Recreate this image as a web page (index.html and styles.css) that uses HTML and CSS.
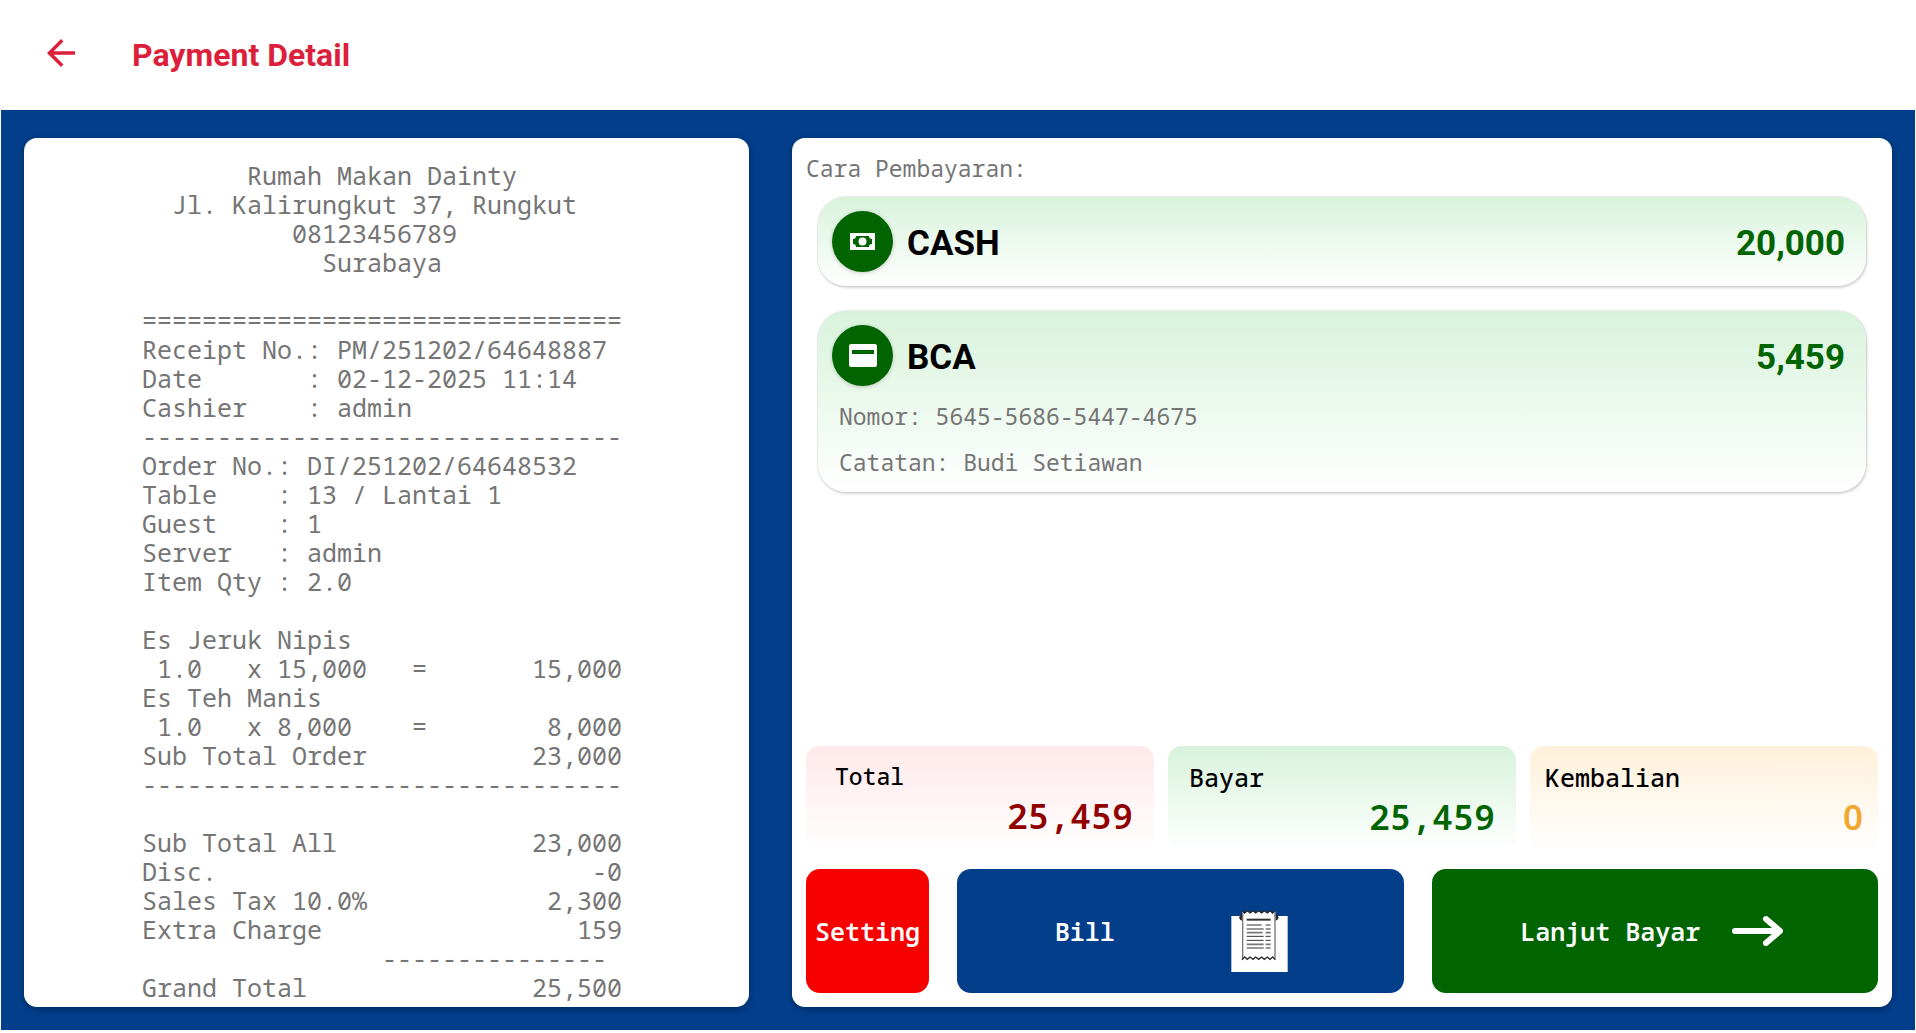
FILE: index.html
```html
<!DOCTYPE html>
<html lang="id">
<head>
    <meta charset="UTF-8">
    <meta name="viewport" content="width=device-width, initial-scale=1.0">
    <title>Payment Detail</title>
    <link rel="stylesheet" href="styles.css">
</head>
<body>
    <header class="topbar">
        <button type="button" class="back" aria-label="Back">
            <svg viewBox="0 0 24 24"><path d="M20 11H7.83l5.59-5.59L12 4l-8 8 8 8 1.41-1.41L7.83 13H20v-2z"/></svg>
        </button>
        <h1>Payment Detail</h1>
    </header>

    <main class="content">
        <section class="panel receipt">
<pre class="receipt-text">
       Rumah Makan Dainty
  Jl. Kalirungkut 37, Rungkut
          08123456789
            Surabaya

================================
Receipt No.: PM/251202/64648887
Date       : 02-12-2025 11:14
Cashier    : admin
--------------------------------
Order No.: DI/251202/64648532
Table    : 13 / Lantai 1
Guest    : 1
Server   : admin
Item Qty : 2.0

Es Jeruk Nipis
 1.0   x 15,000   =       15,000
Es Teh Manis
 1.0   x 8,000    =        8,000
Sub Total Order           23,000
--------------------------------

Sub Total All             23,000
Disc.                         -0
Sales Tax 10.0%            2,300
Extra Charge                 159
                --------------- 
Grand Total               25,500
</pre>
        </section>

        <section class="panel payment">
            <h2 class="payment-title">Cara Pembayaran:</h2>

            <div class="methods">
                <article class="method">
                    <div class="method-row">
                        <span class="method-icon">
                            <svg viewBox="0 0 25 17">
                                <path fill-rule="evenodd" d="M0 0h25v17H0zM6 3a3 3 0 0 1-3 3v5a3 3 0 0 1 3 3h13a3 3 0 0 1 3-3V6a3 3 0 0 1-3-3z"/>
                                <circle cx="12.5" cy="8.5" r="4"/>
                            </svg>
                        </span>
                        <h3>CASH</h3>
                        <span class="method-amount">20,000</span>
                    </div>
                </article>

                <article class="method">
                    <div class="method-row">
                        <span class="method-icon">
                            <svg class="card-icon" viewBox="0 0 28 23">
                                <path fill-rule="evenodd" d="M2 0h24a2 2 0 0 1 2 2v19a2 2 0 0 1-2 2H2a2 2 0 0 1-2-2V2a2 2 0 0 1 2-2zM3 6v4h22V6z"/>
                            </svg>
                        </span>
                        <h3>BCA</h3>
                        <span class="method-amount">5,459</span>
                    </div>
                    <p class="method-note">Nomor: 5645-5686-5447-4675</p>
                    <p class="method-note">Catatan: Budi Setiawan</p>
                </article>
            </div>

            <div class="summary">
                <div class="box total">
                    <span class="box-label">Total</span>
                    <span class="box-value">25,459</span>
                </div>
                <div class="box paid">
                    <span class="box-label">Bayar</span>
                    <span class="box-value">25,459</span>
                </div>
                <div class="box change">
                    <span class="box-label">Kembalian</span>
                    <span class="box-value">0</span>
                </div>
            </div>

            <div class="actions">
                <button type="button" class="btn setting">Setting</button>
                <button type="button" class="btn bill">
                    Bill
                    <svg class="bill-icon" viewBox="0 0 171 186">
                        <path fill="#fff" d="M1 18h169v168H1z"/>
                        <path fill="#2b2b2d" d="M34 10l-6 5-4 8 4 7 6 2zM133 10l6 5 4 8-4 7-6 2z"/>
                        <path fill="#fff" d="M34 3l7 7 8-7 8 7 9-7 8 7 9-7 9 7 8-7 9 7 8-7 8 7 8-7v144l-6-7-8 7-8-7-9 7-8-7-9 7-9-7-8 7-9-7-8 7-9-7-6 7z"/>
                        <path fill="none" stroke="#77777a" stroke-width="4" d="M35 8v138M132 8v138"/>
                        <path fill="none" stroke="#2b2b2d" stroke-width="4" d="M33 2l8 7 8-7 8 7 9-7 8 7 9-7 9 7 8-7 9 7 8-7 8 7 8-7M33 149l8-8 8 7 8-7 9 7 8-7 9 7 9-7 8 7 9-7 8 7 8-7 8 8"/>
                        <path fill="none" stroke="#333335" stroke-width="6" d="M47 29h72"/>
                        <path fill="none" stroke="#77777a" stroke-width="5" d="M47 45h45M104 45h15M47 57h51M104 57h15M47 68h48M104 68h15M47 103h51M104 103h15M47 114h51M104 114h15"/>
                        <path fill="none" stroke="#333335" stroke-width="3" d="M47 79h51M104 79h15M47 91h51M104 91h15"/>
                    </svg>
                </button>
                <button type="button" class="btn pay">
                    Lanjut Bayar
                    <svg class="arrow-icon" viewBox="0 0 52 30"><path d="M3 15h44M34 3l14 12-14 12"/></svg>
                </button>
            </div>
        </section>
    </main>
</body>
</html>
```
FILE: styles.css
```css
* {
    box-sizing: border-box;
}

body {
    margin: 0;
    height: 100vh;
    padding: 0 1px 3px;
    display: flex;
    flex-direction: column;
    background-color: #fff;
    font-family: "Noto Sans Mono", "DejaVu Sans Mono", monospace;
    color: #757575;
}

h1, h2, h3, p, pre {
    margin: 0;
    font-family: inherit;
    font-weight: normal;
}

button {
    border: none;
    padding: 0;
    font-family: inherit;
    cursor: pointer;
}

.topbar {
    flex: none;
    height: 110px;
    padding: 0 39px;
    display: flex;
    align-items: center;
    gap: 50px;
    color: #dc1f3b;
}

.topbar h1 {
    font-family: Roboto, sans-serif;
    font-size: 32px;
    font-weight: bold;
}

.back {
    width: 42px;
    height: 42px;
    margin-bottom: 4px;
    background: none;
    color: inherit;
}

.back svg {
    display: block;
    fill: currentColor;
}

.content {
    flex: 1;
    min-height: 0;
    padding: 28px 23px 23px;
    display: grid;
    grid-template-columns: 725fr 1100fr;
    grid-template-rows: minmax(0, 1fr);
    gap: 43px;
    background-color: #023e8a;
}

.panel {
    background-color: #fff;
    border-radius: 13px;
    box-shadow: 0 2px 6px rgba(0, 0, 0, 0.3);
}

.receipt {
    padding: 23px 9px 0 0;
    overflow: hidden;
}

.receipt-text {
    width: max-content;
    margin: 0 auto;
    font-size: 25px;
    line-height: 29px;
}

.payment {
    padding: 14px;
    display: flex;
    flex-direction: column;
}

.payment-title {
    font-size: 23px;
    line-height: 32px;
}

.methods {
    flex: 1;
    min-height: 0;
    padding: 13px 12px;
    display: flex;
    flex-direction: column;
    gap: 25px;
}

.method {
    padding: 14px 21px 14px 14px;
    border-radius: 28px;
    background: linear-gradient(#d8f3dc, #fff);
    box-shadow: 0 0 2px rgba(0, 0, 0, 0.25), 1px 2px 3px rgba(0, 0, 0, 0.15);
}

.method-row {
    display: flex;
    align-items: center;
    gap: 14px;
    font-family: Roboto, sans-serif;
    font-size: 35px;
}

.method-row h3 {
    flex: 1;
    padding-top: 3px;
    font-size: 35px;
    font-weight: bold;
    color: #000;
}

.method-icon {
    width: 61px;
    height: 61px;
    display: flex;
    align-items: center;
    justify-content: center;
    border-radius: 50%;
    background-color: #006400;
    box-shadow: 0 1px 4px rgba(0, 0, 0, 0.2);
}

.method-icon svg {
    width: 25px;
    fill: #fff;
}

.method-icon .card-icon {
    width: 28px;
}

.method-amount {
    padding-top: 3px;
    font-weight: bold;
    color: #006400;
}

.method-note {
    margin-top: 15px;
    padding: 0 7px;
    font-size: 23px;
    line-height: 31px;
}

.summary {
    display: grid;
    grid-template-columns: repeat(3, 1fr);
    gap: 14px;
    margin-bottom: 17px;
}

.box {
    padding: 14px 21px 12px;
    display: flex;
    flex-direction: column;
    border-radius: 14px;
    font-weight: 500;
}

.box-label {
    font-size: 25px;
    line-height: 34px;
    color: #000;
}

.box-value {
    align-self: flex-end;
    font-size: 35px;
    font-weight: 600;
    line-height: 46px;
}

.total {
    padding-top: 13px;
    padding-left: 29px;
    background: linear-gradient(#ffe9ea, #fff);
    color: #900000;
}

.total .box-label {
    font-size: 23px;
}

.paid {
    background: linear-gradient(#d8f3dc, #fff);
    color: #006400;
}

.change {
    padding-left: 15px;
    padding-right: 15px;
    background: linear-gradient(#fff1da, #fff);
    color: #f0a830;
}

/* plain zero, the mono face has a slashed one */
.change .box-value {
    font-family: "Noto Sans", sans-serif;
}

.actions {
    display: grid;
    grid-template-columns: 123px 1fr 1fr;
    gap: 28px;
}

.btn {
    height: 124px;
    display: flex;
    align-items: center;
    justify-content: center;
    border-radius: 14px;
    font-size: 25px;
    font-weight: 600;
    color: #fff;
}

.setting {
    background-color: #f60000;
}

.bill {
    gap: 116px;
    padding-right: 18px;
    background-color: #023e8a;
}

.bill-icon {
    width: 57px;
    height: 62px;
    margin-top: 20px;
}

.pay {
    gap: 32px;
    padding-right: 5px;
    background-color: #006400;
}

.arrow-icon {
    width: 52px;
    height: 30px;
    fill: none;
    stroke: #fff;
    stroke-width: 6;
    stroke-linecap: round;
    stroke-linejoin: round;
}
```
